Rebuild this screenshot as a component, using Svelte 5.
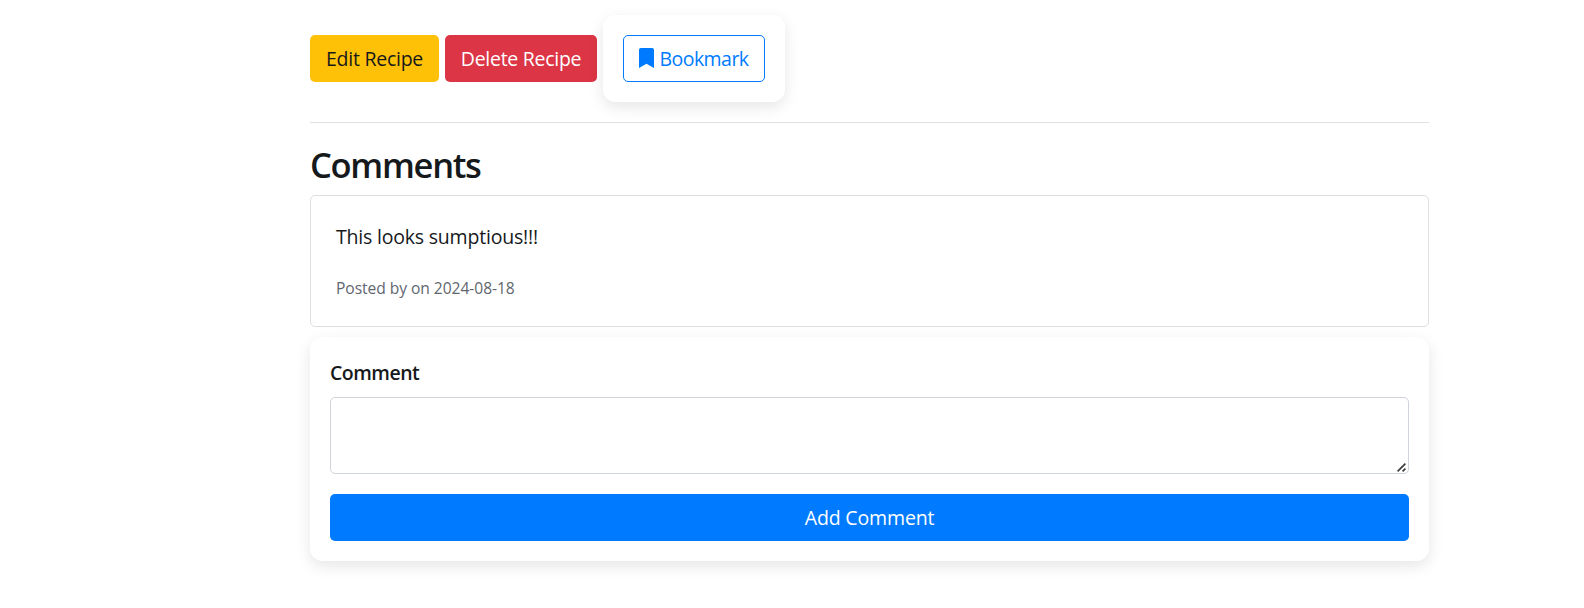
<script>
  const comments = [{ text: 'This looks sumptious!!!', date: '2024-08-18' }];
  let draft = $state('');
</script>

<main class="container">
  <div class="actions">
    <button class="btn edit" type="button"><span>Edit Recipe</span></button>
    <button class="btn delete" type="button"><span>Delete Recipe</span></button>
    <form class="panel bookmark-form">
      <button class="btn bookmark" type="button">
        <svg viewBox="0 0 384 512" width="15" height="20" aria-hidden="true">
          <path fill="currentColor" d="M0 512V48C0 21.49 21.49 0 48 0h288c26.51 0 48 21.49 48 48v464L192 400 0 512z" />
        </svg>
        <span>Bookmark</span>
      </button>
    </form>
  </div>

  <hr />
  <h2>Comments</h2>

  {#each comments as comment}
    <article class="card">
      <p class="text">{comment.text}</p>
      <p class="meta">Posted by on {comment.date}</p>
    </article>
  {/each}

  <form class="panel comment-form">
    <label for="comment">Comment</label>
    <div class="field">
      <textarea id="comment" bind:value={draft}></textarea>
      <svg class="grip" viewBox="0 0 9 9" width="9" height="9" aria-hidden="true">
        <path d="M0.6 8.4 8.4 0.6M5.6 8.4 8.4 5.6" fill="none" stroke="#3c3c3c" stroke-width="1.7" />
      </svg>
    </div>
    <button class="btn add" type="button"><span>Add Comment</span></button>
  </form>
</main>

<style>
  :global(body) {
    background: #fff;
  }
  .container {
    box-sizing: border-box;
    width: 1119px;
    margin-left: 310px;
    padding: 15px 0 40px;
    font-family: 'Open Sans', 'Noto Sans', sans-serif;
    font-size: 19.5px;
    color: #16191c;
  }
  .actions {
    display: flex;
    align-items: center;
    gap: 6px;
  }
  .panel {
    box-sizing: border-box;
    padding: 20px;
    border-radius: 12.5px;
    background: #fff;
    box-shadow: 0 5px 15px rgba(0, 0, 0, 0.1);
  }
  .btn {
    box-sizing: border-box;
    display: flex;
    align-items: center;
    justify-content: center;
    height: 47px;
    padding: 0;
    border: 1px solid transparent;
    border-radius: 5px;
    font: inherit;
    white-space: nowrap;
    color: #fff;
  }
  .edit {
    width: 129px;
    background: #ffc107;
    color: #16191c;
    letter-spacing: -0.25px;
  }
  .delete {
    width: 152px;
    background: #dc3545;
    letter-spacing: -0.28px;
  }
  .bookmark {
    width: 142px;
    gap: 5px;
    border-color: #007bff;
    background: #fff;
    color: #007bff;
    letter-spacing: -0.55px;
  }
  .bookmark svg {
    margin-bottom: 1px;
  }
  hr {
    height: 1px;
    margin: 20px 0 0;
    border: 0;
    background: #e1e1e1;
  }
  h2 {
    margin: 20px 0 0;
    height: 52px;
    line-height: 44px;
    font-size: 34.5px;
    font-weight: 600;
    letter-spacing: -1.3px;
  }
  .card {
    box-sizing: border-box;
    height: 132px;
    padding: 26px 25px;
    border: 1px solid #dfdfdf;
    border-radius: 5px;
  }
  .card p {
    margin: 0;
  }
  .text {
    line-height: 30px;
    letter-spacing: -0.2px;
  }
  .card .meta {
    margin-top: 24px;
    font-size: 15.6px;
    line-height: 24px;
    letter-spacing: -0.05px;
    color: #5f676f;
  }
  .comment-form {
    display: flex;
    flex-direction: column;
    height: 224px;
    margin-top: 10px;
  }
  label {
    height: 40px;
    line-height: 32px;
    font-weight: 600;
    letter-spacing: -0.5px;
  }
  .field {
    position: relative;
    height: 77px;
    margin-bottom: 20px;
  }
  textarea {
    box-sizing: border-box;
    display: block;
    width: 100%;
    height: 100%;
    margin: 0;
    padding: 7px 15px;
    border: 1px solid #ced4da;
    border-radius: 5px;
    background: #fff;
    font: inherit;
    resize: none;
  }
  .grip {
    position: absolute;
    right: 3px;
    bottom: 2px;
  }
  .add {
    width: 100%;
    background: #007bff;
    letter-spacing: -0.15px;
  }
</style>
